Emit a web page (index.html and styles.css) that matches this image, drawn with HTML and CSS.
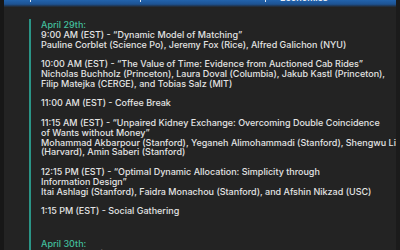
FILE: index.html
```html
<!DOCTYPE html>
<html lang="en">
<head>
<meta charset="utf-8">
<title>Schedule</title>
<link rel="stylesheet" href="styles.css">
</head>
<body>
<div class="screen">
  <header class="topbar">
    <span class="tick tick-a"></span>
    <span class="tick tick-b"></span>
    <span class="tick tick-c"></span>
    <span class="topbar-title">Economics</span>
  </header>
  <main class="content">
    <section class="schedule">
      <div class="day">
        <h2 class="day-title">April 29th:</h2>
        <div class="item">
          <p>9:00 AM (EST) - “Dynamic Model of Matching”</p>
          <p>Pauline Corblet (Science Po), Jeremy Fox (Rice), Alfred Galichon (NYU)</p>
        </div>
        <div class="item">
          <p>10:00 AM (EST) - “The Value of Time: Evidence from Auctioned Cab Rides”</p>
          <p>Nicholas Buchholz (Princeton), Laura Doval (Columbia), Jakub Kastl (Princeton),</p>
          <p>Filip Matejka (CERGE), and Tobias Salz (MIT)</p>
        </div>
        <div class="item">
          <p>11:00 AM (EST) - Coffee Break</p>
        </div>
        <div class="item">
          <p>11:15 AM (EST) - “Unpaired Kidney Exchange: Overcoming Double Coincidence</p>
          <p>of Wants without Money”</p>
          <p>Mohammad Akbarpour (Stanford), Yeganeh Alimohammadi (Stanford), Shengwu Li</p>
          <p>(Harvard), Amin Saberi (Stanford)</p>
        </div>
        <div class="item">
          <p>12:15 PM (EST) - “Optimal Dynamic Allocation: Simplicity through</p>
          <p>Information Design”</p>
          <p>Itai Ashlagi (Stanford), Faidra Monachou (Stanford), and Afshin Nikzad (USC)</p>
        </div>
        <div class="item">
          <p>1:15 PM (EST) - Social Gathering</p>
        </div>
      </div>
      <div class="day">
        <h2 class="day-title">April 30th:</h2>
        <div class="item">
          <p>9:00 AM (EST) - “Cheap Talk and Robust Mechanism Design”</p>
        </div>
      </div>
    </section>
  </main>
</div>
</body>
</html>
```

FILE: styles.css
```css
html, body {
  margin: 0;
  padding: 0;
  background: #1f1f1f;
}

.screen {
  width: 400px;
  height: 250px;
  overflow: hidden;
  box-sizing: border-box;
  background: #232323;
  border-left: 4px solid #171717;
  border-right: 4px solid #1b1b1b;
  font-family: "Inter", "DejaVu Sans", sans-serif;
  font-weight: 500;
  font-size: 9px;
  line-height: 9.8px;
  color: #e4e4e4;
}

.topbar {
  height: 7px;
  display: flex;
  align-items: flex-start;
  overflow: hidden;
  background: linear-gradient(to bottom, #2263ad 0, #1d5393 60%, #1f3552 85%, #25282c 100%);
}

.tick {
  width: 1px;
  height: 2px;
  background: #dfe9f5;
  flex: none;
}

.tick-a { margin-left: 26px; }
.tick-b { margin-left: 109px; }
.tick-c { margin-left: 124px; }

.topbar-title {
  margin-left: 14px;
  margin-top: -7px;
  font-size: 9px;
  line-height: 9px;
  font-weight: 600;
  color: #e8eef6;
  white-space: nowrap;
}

.content {
  padding: 12px 0 0 25px;
}

.schedule {
  border-left: 2px solid #2b9486;
  padding: 1px 0 0 10px;
  min-height: 240px;
}

.day + .day {
  margin-top: 23px;
}

.day-title {
  margin: 0;
  font-size: 9px;
  line-height: 9.8px;
  font-weight: 500;
  color: #42bf9c;
}

.item p {
  margin: 0;
  white-space: nowrap;
}

.item + .item {
  margin-top: 9.8px;
}
```
